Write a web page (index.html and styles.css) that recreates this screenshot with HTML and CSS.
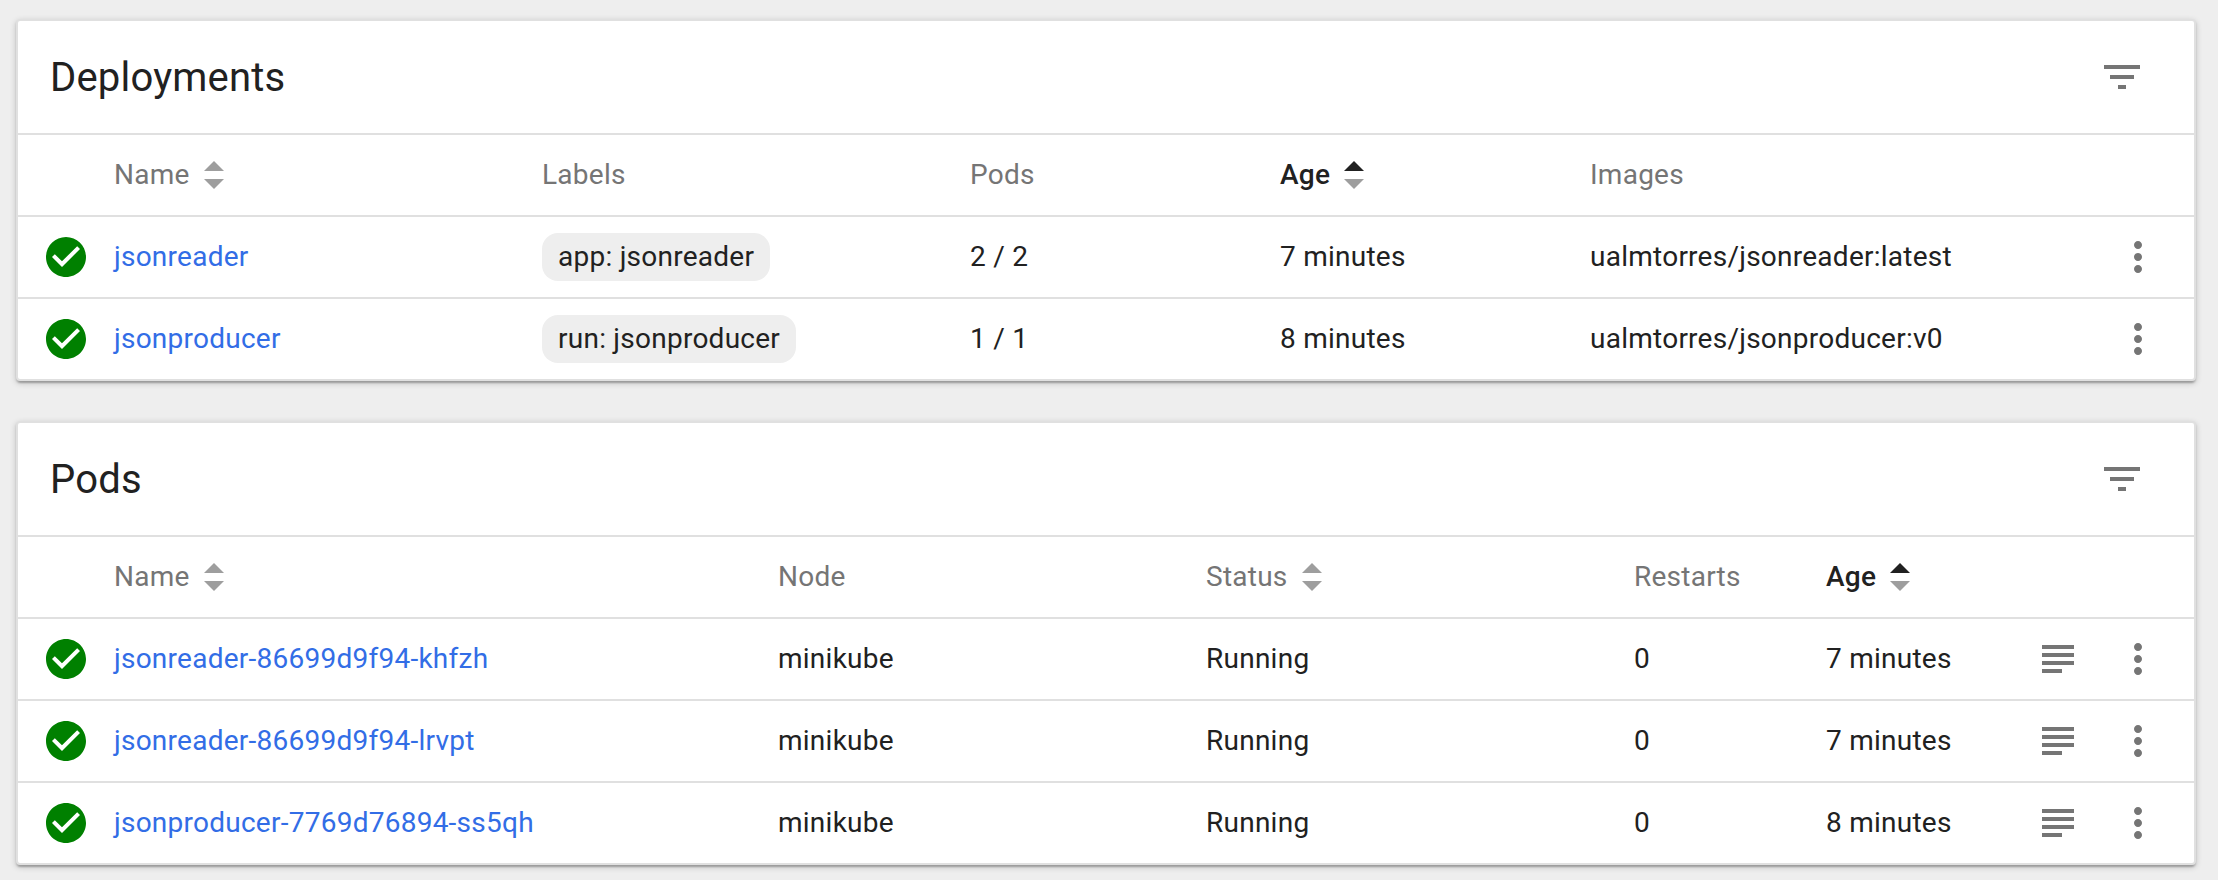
FILE: index.html
```html
<!DOCTYPE html>
<html lang="en">
<head>
<meta charset="utf-8">
<title>Workloads</title>
<link rel="stylesheet" href="styles.css">
</head>
<body>
<svg class="sprite" aria-hidden="true">
  <symbol id="filter" viewBox="0 0 24 24"><path d="M10 18h4v-2h-4v2zM3 6v2h18V6H3zm3 7h12v-2H6v2z"/></symbol>
  <symbol id="check" viewBox="0 0 24 24"><path d="M12 2C6.48 2 2 6.48 2 12s4.48 10 10 10 10-4.48 10-10S17.52 2 12 2zm-2 15l-5-5 1.41-1.41L10 14.17l7.59-7.59L19 8l-9 9z"/></symbol>
  <symbol id="more" viewBox="0 0 24 24"><path d="M12 8c1.1 0 2-.9 2-2s-.9-2-2-2-2 .9-2 2 .9 2 2 2zm0 2c-1.1 0-2 .9-2 2s.9 2 2 2 2-.9 2-2-.9-2-2-2zm0 6c-1.1 0-2 .9-2 2s.9 2 2 2 2-.9 2-2-.9-2-2-2z"/></symbol>
  <symbol id="logs" viewBox="0 0 24 24"><path d="M14 17H4v2h10v-2zm6-8H4v2h16V9zM4 15h16v-2H4v2zM4 5v2h16V5H4z"/></symbol>
  <symbol id="sort" viewBox="0 0 20 28"><path class="sort-up" d="M0 10L10 0l10 10z"/><path class="sort-down" d="M0 18l10 10 10-10z"/></symbol>
</svg>
<main class="page">
  <section class="card deployments">
    <header class="card-header"><h2 class="title">Deployments</h2><svg class="icon"><use href="#filter"/></svg></header>
    <div class="row head">
      <span></span><span class="sortable">Name<svg class="sort"><use href="#sort"/></svg></span><span>Labels</span><span>Pods</span><span class="sortable active">Age<svg class="sort"><use href="#sort"/></svg></span><span>Images</span><span></span>
    </div>
    <div class="row">
      <svg class="icon ok"><use href="#check"/></svg><a class="link">jsonreader</a><span><span class="chip">app: jsonreader</span></span><span>2 / 2</span><span>7 minutes</span><span>ualmtorres/jsonreader:latest</span><svg class="icon"><use href="#more"/></svg>
    </div>
    <div class="row">
      <svg class="icon ok"><use href="#check"/></svg><a class="link">jsonproducer</a><span><span class="chip">run: jsonproducer</span></span><span>1 / 1</span><span>8 minutes</span><span>ualmtorres/jsonproducer:v0</span><svg class="icon"><use href="#more"/></svg>
    </div>
  </section>
  <section class="card pods">
    <header class="card-header"><h2 class="title">Pods</h2><svg class="icon"><use href="#filter"/></svg></header>
    <div class="row head">
      <span></span><span class="sortable">Name<svg class="sort"><use href="#sort"/></svg></span><span>Node</span><span class="sortable">Status<svg class="sort"><use href="#sort"/></svg></span><span>Restarts</span><span class="sortable active">Age<svg class="sort"><use href="#sort"/></svg></span><span></span><span></span>
    </div>
    <div class="row">
      <svg class="icon ok"><use href="#check"/></svg><a class="link">jsonreader-86699d9f94-khfzh</a><span>minikube</span><span>Running</span><span>0</span><span>7 minutes</span><svg class="icon"><use href="#logs"/></svg><svg class="icon"><use href="#more"/></svg>
    </div>
    <div class="row">
      <svg class="icon ok"><use href="#check"/></svg><a class="link">jsonreader-86699d9f94-lrvpt</a><span>minikube</span><span>Running</span><span>0</span><span>7 minutes</span><svg class="icon"><use href="#logs"/></svg><svg class="icon"><use href="#more"/></svg>
    </div>
    <div class="row">
      <svg class="icon ok"><use href="#check"/></svg><a class="link">jsonproducer-7769d76894-ss5qh</a><span>minikube</span><span>Running</span><span>0</span><span>8 minutes</span><svg class="icon"><use href="#logs"/></svg><svg class="icon"><use href="#more"/></svg>
    </div>
  </section>
</main>
</body>
</html>
```
FILE: styles.css
```css
* {
  box-sizing: border-box;
}

body {
  margin: 0;
  background: #eee;
  color: #212121;
  font-family: Roboto, "Liberation Sans", sans-serif;
  font-size: 28px;
  line-height: 40px;
  letter-spacing: 0.25px;
}

.sprite {
  display: none;
}

.page {
  display: flex;
  flex-direction: column;
  gap: 40px;
  padding: 19px 22px 15px 16px;
}

.card {
  background: #fff;
  border: 2px solid #e0e0e0;
  border-radius: 4px;
  box-shadow: 0 2px 6px rgba(0, 0, 0, 0.2), 0 2px 2px rgba(0, 0, 0, 0.14), 0 4px 2px -2px rgba(0, 0, 0, 0.12);
}

.card-header {
  display: flex;
  align-items: center;
  justify-content: space-between;
  height: 112px;
  padding: 0 48px 0 32px;
}

.title {
  margin: 0;
  padding-top: 2px;
  font-size: 40px;
  font-weight: 400;
  letter-spacing: 0.2px;
}

.row {
  display: grid;
  align-items: center;
  height: 82px;
  padding-left: 24px;
  border-top: 2px solid #e0e0e0;
  white-space: nowrap;
}

.deployments .row {
  grid-template-columns: 72px 428px 428px 310px 310px 524px 48px;
}

.pods .row {
  grid-template-columns: 72px 664px 428px 428px 192px 208px 80px 48px;
}

.head {
  color: #757575;
}

.sortable {
  display: flex;
  align-items: center;
  gap: 14px;
}

.active {
  color: #212121;
  font-weight: 500;
}

.sort {
  width: 20px;
  height: 28px;
  fill: #9e9e9e;
  --up: #9e9e9e;
}

.active .sort {
  --up: #212121;
}

.sort-up {
  fill: var(--up);
}

.icon {
  display: block;
  width: 48px;
  height: 48px;
  fill: #757575;
}

.ok {
  fill: #008000;
}

.link {
  color: #326de6;
}

.chip {
  display: block;
  width: fit-content;
  height: 48px;
  padding: 0 16px;
  border-radius: 16px;
  background: #eee;
  line-height: 48px;
}
```
